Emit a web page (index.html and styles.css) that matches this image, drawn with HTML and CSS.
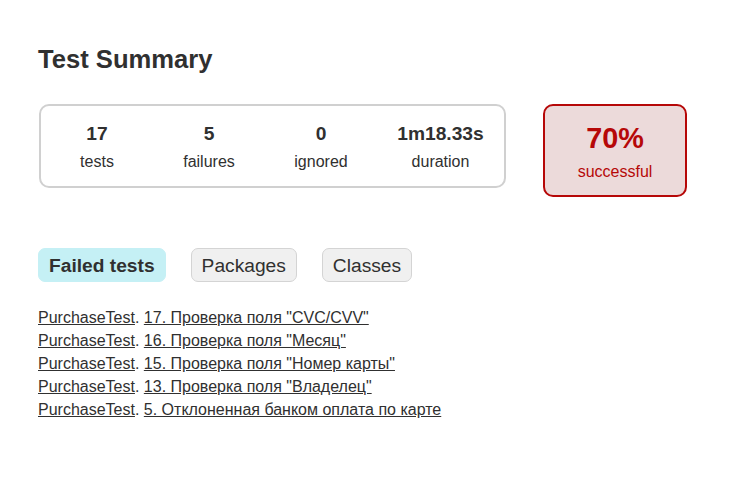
FILE: index.html
```html
<!DOCTYPE html>
<html>
<head>
<meta charset="utf-8">
<title>Test results - Test Summary</title>
<link rel="stylesheet" href="styles.css">
</head>
<body>
<div class="content">
  <h1 class="title">Test Summary</h1>
  <div class="summary">
    <div class="cell">
      <div class="summary-group">
        <div class="cell">
          <div class="info-box">
            <div class="counter">17</div>
            <p class="label">tests</p>
          </div>
        </div>
        <div class="cell">
          <div class="info-box">
            <div class="counter">5</div>
            <p class="label">failures</p>
          </div>
        </div>
        <div class="cell">
          <div class="info-box">
            <div class="counter">0</div>
            <p class="label">ignored</p>
          </div>
        </div>
        <div class="cell">
          <div class="info-box info-box-wide">
            <div class="counter">1m18.33s</div>
            <p class="label">duration</p>
          </div>
        </div>
      </div>
    </div>
    <div class="cell">
      <div class="info-box success-rate failures">
        <div class="percent">70%</div>
        <p class="label">successful</p>
      </div>
    </div>
  </div>

  <ul class="tab-links">
    <li class="tab-link selected"><h2 class="tab-title">Failed tests</h2></li>
    <li class="tab-link"><a class="tab-anchor" href="#tab1">Packages</a></li>
    <li class="tab-link"><a class="tab-anchor" href="#tab2">Classes</a></li>
  </ul>

  <div class="tab">
    <ul class="link-list">
      <li class="link-item"><a class="link" href="#">PurchaseTest</a>. <a class="link" href="#">17. Проверка поля "CVC/CVV"</a></li>
      <li class="link-item"><a class="link" href="#">PurchaseTest</a>. <a class="link" href="#">16. Проверка поля "Месяц"</a></li>
      <li class="link-item"><a class="link" href="#">PurchaseTest</a>. <a class="link" href="#">15. Проверка поля "Номер карты"</a></li>
      <li class="link-item"><a class="link" href="#">PurchaseTest</a>. <a class="link" href="#">13. Проверка поля "Владелец"</a></li>
      <li class="link-item"><a class="link" href="#">PurchaseTest</a>. <a class="link" href="#">5. Отклоненная банком оплата по карте</a></li>
    </ul>
  </div>
</div>
</body>
</html>
```

FILE: styles.css
```css
html, body {
  margin: 0;
  padding: 0;
  background: #ffffff;
}

body {
  font-family: "Liberation Sans", Arial, sans-serif;
  font-size: 16px;
  color: #303030;
}

.content {
  padding: 27px 38px 30px 38px;
}

.title {
  font-size: 25.6px;
  font-weight: bold;
  margin: 18px 0 0 0;
  line-height: normal;
}

.summary {
  display: flex;
  align-items: flex-start;
  margin-top: 29px;
}

.cell {
  padding: 1px;
}

.summary-group {
  display: flex;
  border: solid 2px #d0d0d0;
  border-radius: 10px;
}

.info-box {
  width: 110px;
  padding: 16px 0 14px 0;
  text-align: center;
}

.info-box-wide {
  width: 125px;
}

.counter {
  font-size: 19.2px;
  font-weight: bold;
  margin-bottom: 8px;
}

.label {
  margin: 0;
}

.success-rate {
  width: 140px;
  margin-left: 35px;
  border: solid 2px #b60808;
  border-radius: 10px;
}

.failures {
  background-color: #ecdada;
  color: #b60808;
}

.percent {
  font-size: 28.8px;
  font-weight: bold;
  margin-bottom: 8px;
}

.tab-links {
  display: flex;
  list-style: none;
  margin: 40px 0 0 0;
  padding: 10px 0;
}

.tab-link {
  padding: 6px 10px 4px 10px;
  margin-right: 25px;
  border: solid 1px #d4d4d4;
  border-radius: 7px;
  background-color: #f0f0f0;
}

.tab-link.selected {
  background-color: #c5f0f5;
  border-color: #c5f0f5;
}

.tab-title {
  margin: 0;
  padding: 0;
  font-size: 19.2px;
  font-weight: bold;
}

.tab-anchor {
  display: block;
  font-size: 19.2px;
  color: #303030;
  text-decoration: none;
}

.tab {
  margin-top: 17px;
}

.link-list {
  list-style: none;
  padding: 0;
  margin: 0;
}

.link-item {
  margin-bottom: 5px;
}

.link {
  color: #303030;
}
```
